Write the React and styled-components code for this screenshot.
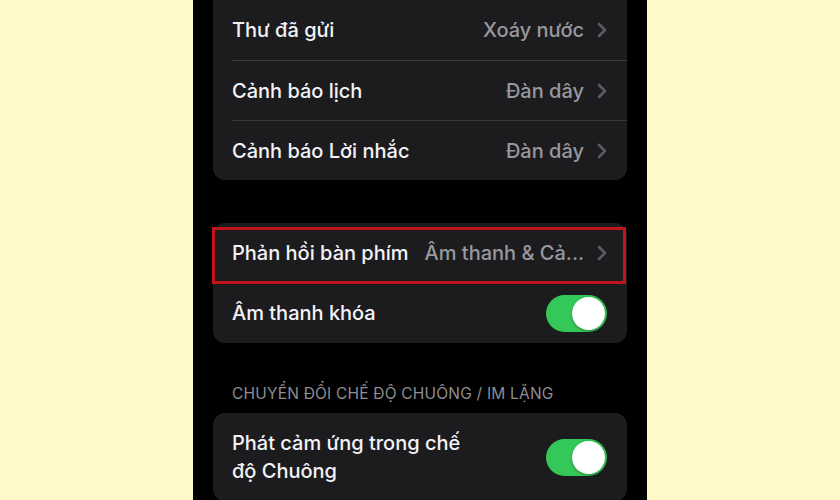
import React from 'react';
import styled, { createGlobalStyle } from 'styled-components';

const Global = createGlobalStyle`
  html, body {
    margin: 0;
    padding: 0;
    background: #fef9c6;
    font-family: Inter, "Noto Sans", sans-serif;
  }
`;

const Page = styled.div`
  width: 840px;
  height: 500px;
  display: flex;
  justify-content: center;
  background: #fef9c6;
  overflow: hidden;
`;

const Phone = styled.div`
  width: 454px;
  height: 500px;
  background: #000;
  padding: 0 20px;
  box-sizing: border-box;
  display: flex;
  flex-direction: column;
`;

const Card = styled.div`
  background: #1c1c1e;
  border-radius: ${p => (p.$cutTop ? '0 0 12px 12px' : '12px')};
  margin-top: ${p => p.$top || 0}px;
  padding-left: 19px;
`;

const Row = styled.div`
  position: relative;
  display: flex;
  align-items: center;
  min-height: ${p => p.$tall ? 88 : 60}px;
  padding-right: 20px;
  border-top: ${p => (p.$divider ? '1px solid #38383a' : 'none')};
  box-sizing: border-box;

  ${p => p.$highlight && `
    &::after {
      content: '';
      position: absolute;
      top: 4px;
      bottom: -1px;
      left: -20px;
      right: 1px;
      border: 3px solid #c0161b;
      pointer-events: none;
    }
  `}
`;

const Label = styled.div`
  color: #f2f2f7;
  font-size: 20px;
  font-weight: 500;
  line-height: 28px;
  margin-right: auto;
  white-space: ${p => (p.$wrap ? 'normal' : 'nowrap')};
  max-width: ${p => (p.$wrap ? '250px' : 'none')};
`;

const Value = styled.div`
  color: #98989e;
  font-size: 20px;
  font-weight: 500;
  white-space: nowrap;
  margin-left: 16px;
  margin-right: 13px;
`;

const Chevron = () => (
  <svg width="10" height="16" viewBox="0 0 10 16">
    <path d="M2 2 L8 8 L2 14" fill="none" stroke="#5b5b60" strokeWidth="2.6" strokeLinecap="round" strokeLinejoin="round" />
  </svg>
);

const Track = styled.div`
  width: 61px;
  height: 37px;
  border-radius: 19px;
  background: #34c759;
  position: relative;
  flex-shrink: 0;
`;

const Knob = styled.div`
  position: absolute;
  top: 2px;
  right: 2px;
  width: 33px;
  height: 33px;
  border-radius: 50%;
  background: #fff;
  box-shadow: 0 1px 3px rgba(0, 0, 0, 0.3);
`;

const Toggle = () => (
  <Track>
    <Knob />
  </Track>
);

const SectionHeader = styled.div`
  margin-top: 37px;
  padding-left: 19px;
  color: #8d8d93;
  font-size: 15.5px;
  font-weight: 400;
  letter-spacing: 0.2px;
  line-height: 28px;
`;

const NavRow = ({ label, value, divider, highlight }) => (
  <Row $divider={divider} $highlight={highlight}>
    <Label>{label}</Label>
    <Value>{value}</Value>
    <Chevron />
  </Row>
);

export default function App() {
  return (
    <Page>
      <Global />
      <Phone>
        <Card $cutTop>
          <NavRow label="Thư đã gửi" value="Xoáy nước" />
          <NavRow label="Cảnh báo lịch" value="Đàn dây" divider />
          <NavRow label="Cảnh báo Lời nhắc" value="Đàn dây" divider />
        </Card>

        <Card $top={43}>
          <NavRow label="Phản hồi bàn phím" value="Âm thanh & Cả..." highlight />
          <Row>
            <Label>Âm thanh khóa</Label>
            <Toggle />
          </Row>
        </Card>

        <SectionHeader>CHUYỂN ĐỔI CHẾ ĐỘ CHUÔNG / IM LẶNG</SectionHeader>

        <Card $top={5}>
          <Row $tall>
            <Label $wrap>Phát cảm ứng trong chế độ Chuông</Label>
            <Toggle />
          </Row>
        </Card>
      </Phone>
    </Page>
  );
}
